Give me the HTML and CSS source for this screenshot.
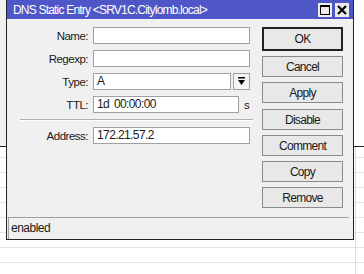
FILE: index.html
```html
<!DOCTYPE html>
<html lang="en">
<head>
  <meta charset="UTF-8" />
  <title>DNS Static Entry</title>
  <link rel="stylesheet" href="styles.css">
</head>
<body>

  <div class="desk">
    <div class="desk-top"></div>
    <div class="desk-rows"></div>
  </div>

  <div class="window">
    <div class="titlebar">
      <span class="title">DNS Static Entry &lt;SRV1C.Citylomb.local&gt;</span>
      <span class="tb-btn">
        <svg width="10" height="10" viewBox="0 0 10 10"><rect x="0.5" y="0.5" width="9" height="9" fill="none" stroke="#000"/><rect x="0" y="0" width="10" height="2" fill="#000"/></svg>
      </span>
      <span class="tb-btn">
        <svg width="10" height="10" viewBox="0 0 10 10"><path d="M1 1 L9 9 M9 1 L1 9" stroke="#000" stroke-width="2.2"/></svg>
      </span>
    </div>

    <div class="body">
      <div class="form">
        <div class="row">
          <label>Name:</label>
          <div class="field name"></div>
        </div>
        <div class="row">
          <label>Regexp:</label>
          <div class="field"></div>
        </div>
        <div class="row">
          <label>Type:</label>
          <div class="field short">A</div>
          <div class="drop">
            <svg width="9" height="9" viewBox="0 0 9 9"><rect x="1" y="0" width="7" height="1.5" fill="#000"/><path d="M1 3 L8 3 L4.5 8 Z" fill="#000"/></svg>
          </div>
        </div>
        <div class="row">
          <label>TTL:</label>
          <div class="field ttl">1d 00:00:00</div>
          <span class="unit">s</span>
        </div>
        <div class="sep"></div>
        <div class="row">
          <label>Address:</label>
          <div class="field">172.21.57.2</div>
        </div>
      </div>

      <div class="buttons">
        <button class="btn default">OK</button>
        <button class="btn">Cancel</button>
        <button class="btn gap">Apply</button>
        <button class="btn">Disable</button>
        <button class="btn">Comment</button>
        <button class="btn">Copy</button>
        <button class="btn">Remove</button>
      </div>
    </div>

    <div class="status">enabled</div>
  </div>

</body>
</html>
```

FILE: styles.css
```css
body {
  margin: 0;
  width: 364px;
  height: 274px;
  overflow: hidden;
  position: relative;
  background: #fff;
  font-family: "Liberation Sans", Arial, sans-serif;
  font-size: 11.5px;
  letter-spacing: -0.5px;
  color: #1a1a1a;
}
.desk-top {
  height: 146px;
  background: linear-gradient(to right, #f0f0f0 0, #f0f0f0 6px, #fff 6px);
  border-bottom: 1px solid #222;
}
.desk-rows {
  height: 127px;
  background:
    linear-gradient(to right, transparent 355px, #dcdcdc 355px, #dcdcdc 356px, transparent 356px),
    repeating-linear-gradient(to bottom, #fff 0, #fff 10px, #e4e4e4 10px, #e4e4e4 11px, #fff 11px, #fff 15px);
}
.window {
  position: absolute;
  left: 6px;
  top: 0;
  width: 346px;
  height: 239px;
  background: #f0f0f0;
  border: 1px solid #222;
  border-top: none;
  display: flex;
  flex-direction: column;
}
.titlebar {
  height: 19px;
  background: #4f57c8;
  display: flex;
  align-items: center;
  padding: 0 4px 0 6px;
  gap: 3px;
}
.title {
  flex: 1;
  color: #fff;
  font-size: 12px;
  letter-spacing: -0.8px;
}
.tb-btn {
  width: 14px;
  height: 14px;
  background: #ececec;
  display: flex;
  align-items: center;
  justify-content: center;
}
.body {
  flex: 1;
  display: flex;
  padding: 8px 8px 0 7px;
}
.form {
  width: 239px;
}
.row {
  display: flex;
  align-items: center;
  height: 17px;
  margin-bottom: 6px;
}
.row label {
  width: 74px;
  text-align: right;
  padding-right: 5px;
}
.field {
  width: 152px;
  height: 15px;
  line-height: 15px;
  background: #fff;
  border: 1px solid #a0a0a0;
  padding-left: 3px;
  font-size: 12px;
  letter-spacing: -0.6px;
  word-spacing: 2px;
}
.field.short {
  width: 133px;
}
.field.ttl {
  width: 141px;
}
.drop {
  width: 15px;
  height: 15px;
  margin-left: 2px;
  border: 1px solid #a0a0a0;
  background: #f4f4f4;
  display: flex;
  align-items: center;
  justify-content: center;
}
.unit {
  margin-left: 5px;
}
.sep {
  height: 1px;
  background: #b0b0b0;
  border-bottom: 1px solid #fff;
  margin: 2px 0 6px 6px;
}
.buttons {
  margin-left: 9px;
  display: flex;
  flex-direction: column;
  gap: 5px;
}
.btn {
  width: 81px;
  height: 21px;
  font-family: inherit;
  font-size: 12px;
  letter-spacing: -0.7px;
  color: #1a1a1a;
  background: #e8e8e8;
  border: 1px solid #8a8a8a;
  padding: 0;
}
.btn.default {
  height: 24px;
  border: 2px solid #222;
}
.btn.gap {
  margin-bottom: 1px;
}
.status {
  margin: 0 4px 0 1px;
  height: 21px;
  line-height: 20px;
  border-top: 1px solid #a0a0a0;
  border-left: 1px solid #a0a0a0;
  padding-left: 2px;
  font-size: 12px;
  letter-spacing: -0.5px;
}
```
